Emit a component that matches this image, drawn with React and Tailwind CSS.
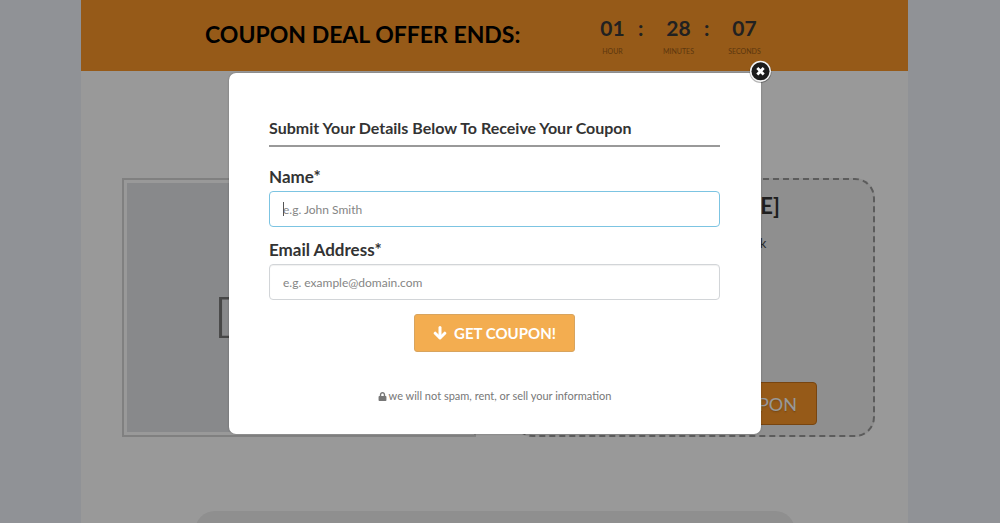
import { FaLock } from 'react-icons/fa';

const COUNTDOWN = [
  { value: '01', label: 'HOUR' },
  { value: '28', label: 'MINUTES' },
  { value: '07', label: 'SECONDS' },
];

const FIELDS = [
  { id: 'name', label: 'Name*', type: 'text', placeholder: 'e.g. John Smith', active: true },
  { id: 'email', label: 'Email Address*', type: 'email', placeholder: 'e.g. example@domain.com' },
];

function Banner() {
  return (
    <header className="flex h-[71px] bg-[#fa9628]">
      <h1 className="w-[515px] pt-[18px] pl-[124px] text-[23px] leading-8 font-bold whitespace-nowrap text-black">
        COUPON DEAL OFFER ENDS:
      </h1>
      <div className="flex pt-4">
        {COUNTDOWN.map((part, i) => (
          <div key={part.label} className="flex w-[66px]">
            <div className="flex w-[33px] flex-col items-center whitespace-nowrap">
              <span className="text-[21px] leading-6 font-bold text-[#383838]">{part.value}</span>
              <span className="mt-[3px] text-[7px] leading-4 text-[#9a5c18]">{part.label}</span>
            </div>
            {i < COUNTDOWN.length - 1 && (
              <span className="pl-[9px] text-[21px] leading-6 font-bold text-[#383838]">:</span>
            )}
          </div>
        ))}
      </div>
    </header>
  );
}

function Page() {
  return (
    <div className="min-h-screen bg-white">
      <Banner />
      <main className="pt-[107px]">
        <div className="flex gap-[37px] pr-[33px] pl-[41px]">
          <div className="h-[259px] flex-1 border-2 border-[#d5d5d5] p-[3px]">
            <div className="flex h-full items-center bg-[#e3e4e8] pt-4 pl-[86px] text-[58px] leading-none font-light text-[#777]">
              DEAL
            </div>
          </div>
          <div className="flex h-[259px] w-[362px] flex-col items-center rounded-[20px] border-2 border-dashed border-[#999] bg-[#eee] pt-[10px]">
            <h2 className="text-[22px] leading-8 font-bold whitespace-nowrap text-[#333]">[COUPON TITLE]</h2>
            <p className="mt-[11px] text-[13px] leading-5 text-[#444]">Click to claim it this week</p>
            <button
              type="button"
              className="mt-auto mb-[10px] h-[43px] w-[246px] rounded border border-[#c8741c] bg-[#fa9628] pr-[19px] text-right text-lg text-white text-shadow-sm"
            >
              GET THE COUPON
            </button>
          </div>
        </div>
        <div className="mx-auto mt-[74px] h-40 w-[600px] rounded-[20px] bg-[#eee]" />
      </main>
    </div>
  );
}

function CloseButton() {
  return (
    <button type="button" aria-label="Close" className="absolute -top-[13px] -right-[11px] size-[23px]">
      <svg viewBox="0 0 23 23" className="size-full">
        <circle cx="11.5" cy="11.9" r="11" fill="#000" opacity="0.3" />
        <circle cx="11.5" cy="11.3" r="10.6" fill="#f4f4f4" />
        <circle cx="11.5" cy="11.3" r="9" fill="#1c1c1c" />
        <path d="M8.3 8.1l6.4 6.4M14.7 8.1l-6.4 6.4" stroke="#fff" strokeWidth="2.8" />
      </svg>
    </button>
  );
}

function ArrowDown() {
  return (
    <svg viewBox="0 0 14 14" className="size-[14px]" fill="none" stroke="currentColor" strokeWidth="3">
      <path d="M7 1.6v9.6" strokeLinecap="round" />
      <path d="M2.2 7.2l4.8 4.8 4.8-4.8" strokeLinecap="round" strokeLinejoin="round" />
    </svg>
  );
}

function Field({ id, label, type, placeholder, active }) {
  return (
    <div>
      <label htmlFor={id} className="mb-1 block text-[17px] leading-5 font-bold">
        {label}
      </label>
      <div className="relative">
        <input
          id={id}
          type={type}
          placeholder={placeholder}
          className={`block h-9 w-full rounded border bg-white px-[13px] text-xs outline-none placeholder:text-[#858585] ${
            active ? 'border-[#7cc4e2]' : 'border-[#d2d5d8] shadow-[inset_0_1px_1px_rgba(0,0,0,0.06)]'
          }`}
        />
        {active && <span className="absolute top-[11px] left-[14px] h-[14px] w-px bg-[#555]" />}
      </div>
    </div>
  );
}

function CouponModal() {
  return (
    <div
      role="dialog"
      className="relative w-[532px] rounded-[7px] bg-white pt-[45px] pr-[41px] pb-7 pl-10 text-[#333] shadow-[0_0_2px_rgba(0,0,0,0.3)]"
    >
      <CloseButton />
      <h3 className="border-b-2 border-[#999] pb-[7px] text-base leading-5 font-bold">
        Submit Your Details Below To Receive Your Coupon
      </h3>
      <form className="mt-5 flex flex-col" onSubmit={(e) => e.preventDefault()}>
        <div className="space-y-[13px]">
          {FIELDS.map((field) => (
            <Field key={field.id} {...field} />
          ))}
        </div>
        <button
          type="submit"
          className="mt-[14px] flex h-[38px] w-[161px] items-center justify-center gap-[7px] self-center rounded-[3px] border border-[#d8a45e] bg-[#f3ad50] text-[15px] font-bold text-white"
        >
          <ArrowDown />
          GET COUPON!
        </button>
      </form>
      <p className="mt-[34px] flex items-center justify-center gap-[2px] text-[11px] leading-5 text-[#777]">
        <FaLock className="size-[9px]" />
        we will not spam, rent, or sell your information
      </p>
    </div>
  );
}

export default function App() {
  return (
    <div className="relative h-screen overflow-hidden bg-[#f1f3fb] font-['Lato',sans-serif]">
      <div className="pr-[92px] pl-[81px]">
        <Page />
      </div>
      <div className="absolute inset-0 flex items-start justify-center bg-black/40 pt-[73px] pr-[10px]">
        <CouponModal />
      </div>
    </div>
  );
}
